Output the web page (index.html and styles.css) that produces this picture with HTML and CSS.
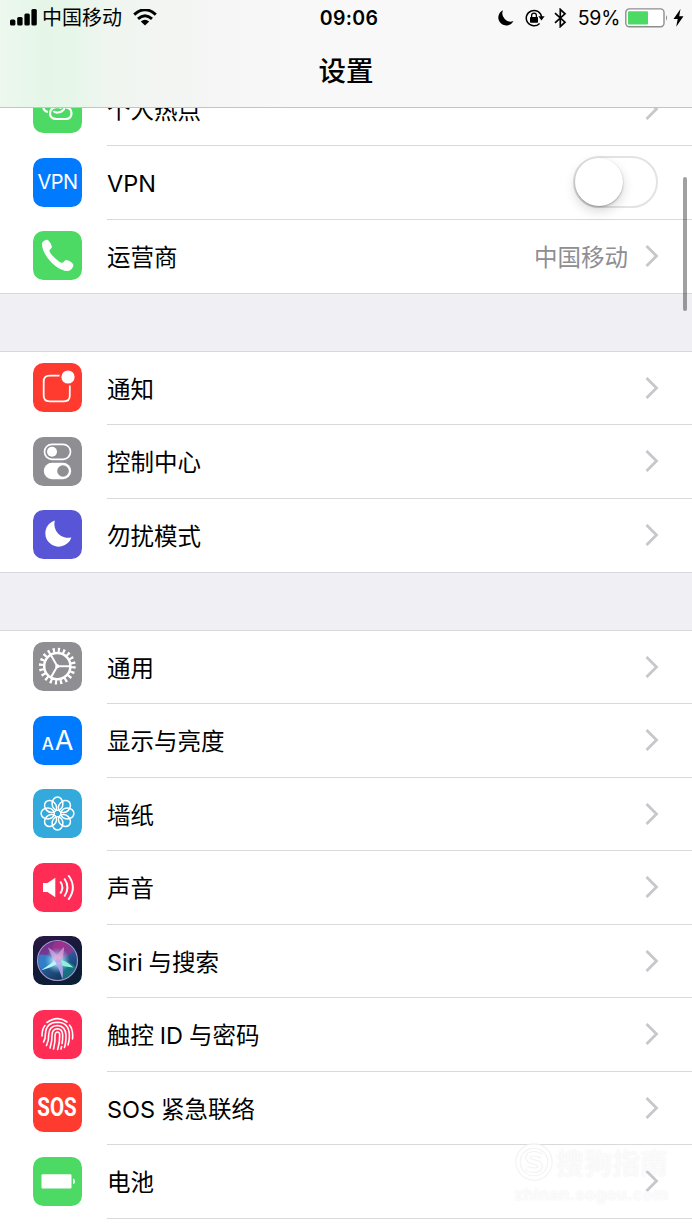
FILE: index.html
```html
<!DOCTYPE html>
<html lang="zh-CN">
<head>
    <meta charset="UTF-8">
    <title>设置</title>
    <link rel="stylesheet" href="styles.css">
</head>
<body>
<svg class="defs" width="0" height="0">
    <symbol id="chevron" viewBox="0 0 14 24">
        <path d="M1.5 2L11.5 12L1.5 22" fill="none" stroke="#c7c7cc" stroke-width="2.8"/>
    </symbol>
</svg>
<div class="header">
    <div class="status">
        <div class="status-left">
            <svg width="28" height="18" viewBox="0 0 28 18">
                <rect x="0" y="10.5" width="5.4" height="6" rx="1.5"/>
                <rect x="7.2" y="8" width="5.4" height="8.5" rx="1.5"/>
                <rect x="14.4" y="4.5" width="5.4" height="12" rx="1.5"/>
                <rect x="21.4" y="0" width="5.4" height="16.5" rx="1.5"/>
            </svg>
            <span class="carrier">中国移动</span>
            <svg width="24" height="18" viewBox="0 0 24 18">
                <path d="M1.2 5.6Q12-4 22.8 5.6M5 9.8Q12 3.6 19 9.8" fill="none" stroke="#000" stroke-width="3"/>
                <path d="M7.8 12.6Q12 9 16.2 12.6L12 16.6Z"/>
            </svg>
        </div>
        <div class="time">09:06</div>
        <div class="status-right">
            <svg class="st-moon" width="16" height="16" viewBox="0 0 16 16">
                <path d="M5 .2A8 8 0 1 0 15.5 11A8.2 8.2 0 0 1 5 .2Z"/>
            </svg>
            <svg class="st-lock" width="20" height="18" viewBox="0 0 20 18">
                <path d="M14.6 14.4A7.7 7.7 0 1 1 16.6 8" fill="none" stroke="#000" stroke-width="1.5"/>
                <path d="M13.4 7.2H19.6L16.5 11.4Z"/>
                <rect x="5" y="8" width="8" height="5.8" rx=".7"/>
                <path d="M6.6 8.5V6.6A2.4 2.4 0 0 1 11.4 6.6V8.5" fill="none" stroke="#000" stroke-width="1.3"/>
            </svg>
            <svg class="st-bt" width="13" height="20" viewBox="0 0 13 20">
                <path d="M1 5.2L11 14.2L6.3 18.6V1.4L11 5.8L1 14.8" fill="none" stroke="#000" stroke-width="1.7"/>
            </svg>
            <span class="percent">59%</span>
            <svg class="st-battery" width="43" height="20" viewBox="0 0 43 20">
                <rect x=".8" y=".9" width="38.2" height="17.8" rx="3.5" fill="#fff" stroke="#8e8e8e" stroke-width="1.4"/>
                <rect x="3" y="3.2" width="20" height="13.2" rx="1" fill="#4cd964"/>
                <path d="M41 7Q43.2 9.8 41 12.8Z" fill="#8e8e8e"/>
            </svg>
            <svg class="st-bolt" width="11" height="18" viewBox="0 0 11 18">
                <path d="M7.5 0L.5 10H4.7L3.2 17.8L10.5 7.2H6.2Z"/>
            </svg>
        </div>
    </div>
    <h1 class="title">设置</h1>
</div>

<div class="settings">
    <ul class="group group-first">
        <li>
            <svg class="icon green" viewBox="0 0 49 49">
                <g fill="none" stroke="#fff" stroke-width="2.2">
                    <path d="M15 28Q10 27 10 21.5Q10 15 17 15H26Q32 15 32 21Q32 27.5 25 28.5Q21.5 28.8 20.5 27"/>
                    <path d="M33 23.5Q38.5 24 38.5 29.3Q38.5 35 32.5 35H23.5Q17 35 17 29.5Q17 24 23 23.2Q27.5 22.6 28.5 24.5"/>
                </g>
            </svg>
            <div class="cell"><span class="label">个人热点</span><svg class="arrow"><use href="#chevron"/></svg></div>
        </li>
        <li>
            <div class="icon blue icon-vpn">VPN</div>
            <div class="cell"><span class="label">VPN</span><span class="switch"></span></div>
        </li>
        <li>
            <svg class="icon green" viewBox="0 0 49 49">
                <path d="M9 13.5C8.5 11.5 12 8.6 14 8.8C16.3 9.1 18.6 14 18.9 16C19 17.8 16 18.5 16.5 20.2C17.6 23.5 25.5 31 28.8 31.8C30.5 32.2 31.3 29 33 28.9C35.3 28.9 40.4 32 40.4 34C40.2 36.5 38 39.8 35 40C24 40.4 9.4 24.5 9 13.5Z" fill="#fff"/>
            </svg>
            <div class="cell"><span class="label">运营商</span><span class="value">中国移动</span><svg class="arrow"><use href="#chevron"/></svg></div>
        </li>
    </ul>

    <ul class="group">
        <li>
            <svg class="icon red" viewBox="0 0 49 49">
                <path d="M26.5 12.7H16.5Q10.7 12.7 10.7 18.5V32.5Q10.7 38.3 16.5 38.3H31Q36.8 38.3 36.8 32.5V22.5" fill="none" stroke="#fff" stroke-width="1.8"/>
                <circle cx="35" cy="14" r="6.6" fill="#fff"/>
            </svg>
            <div class="cell"><span class="label">通知</span><svg class="arrow"><use href="#chevron"/></svg></div>
        </li>
        <li>
            <svg class="icon gray" viewBox="0 0 49 49">
                <rect x="11.5" y="7.3" width="26" height="15" rx="7.5" fill="none" stroke="#fff" stroke-width="1.7"/>
                <circle cx="19" cy="14.8" r="5" fill="#fff"/>
                <rect x="10.8" y="25.8" width="27.4" height="16.4" rx="8.2" fill="#fff"/>
                <circle cx="30" cy="34" r="5.8" fill="#8e8e93"/>
            </svg>
            <div class="cell"><span class="label">控制中心</span><svg class="arrow"><use href="#chevron"/></svg></div>
        </li>
        <li>
            <svg class="icon purple" viewBox="0 0 49 49">
                <path d="M21.8 10.4A13.4 13.4 0 1 0 38.4 27.4A13.8 13.8 0 0 1 21.8 10.4Z" fill="#fff"/>
            </svg>
            <div class="cell"><span class="label">勿扰模式</span><svg class="arrow"><use href="#chevron"/></svg></div>
        </li>
    </ul>

    <ul class="group">
        <li>
            <svg class="icon gray" viewBox="0 0 49 49">
                <g fill="none" stroke="#fff">
                    <circle cx="24.3" cy="24.2" r="13.1" stroke-width="2.5"/>
                    <circle cx="24.3" cy="24.2" r="16" stroke-width="4.8" stroke-dasharray="2.2 2.828"/>
                    <path d="M24.3 24.2H37M24.3 24.2L18 13.2M24.3 24.2L18 35.2" stroke-width="2"/>
                </g>
                <circle cx="24.3" cy="24.2" r="2" fill="#fff"/>
            </svg>
            <div class="cell"><span class="label">通用</span><svg class="arrow"><use href="#chevron"/></svg></div>
        </li>
        <li>
            <div class="icon blue icon-aa"><small>A</small>A</div>
            <div class="cell"><span class="label">显示与亮度</span><svg class="arrow"><use href="#chevron"/></svg></div>
        </li>
        <li>
            <svg class="icon cyan" viewBox="0 0 49 49">
                <g fill="none" stroke="#fff" stroke-width="1.5">
                    <ellipse cx="24.5" cy="14.7" rx="5.4" ry="6.6"/>
                    <ellipse cx="24.5" cy="14.7" rx="5.4" ry="6.6" transform="rotate(45 24.5 24.5)"/>
                    <ellipse cx="24.5" cy="14.7" rx="5.4" ry="6.6" transform="rotate(90 24.5 24.5)"/>
                    <ellipse cx="24.5" cy="14.7" rx="5.4" ry="6.6" transform="rotate(135 24.5 24.5)"/>
                    <ellipse cx="24.5" cy="14.7" rx="5.4" ry="6.6" transform="rotate(180 24.5 24.5)"/>
                    <ellipse cx="24.5" cy="14.7" rx="5.4" ry="6.6" transform="rotate(225 24.5 24.5)"/>
                    <ellipse cx="24.5" cy="14.7" rx="5.4" ry="6.6" transform="rotate(270 24.5 24.5)"/>
                    <ellipse cx="24.5" cy="14.7" rx="5.4" ry="6.6" transform="rotate(315 24.5 24.5)"/>
                </g>
            </svg>
            <div class="cell"><span class="label">墙纸</span><svg class="arrow"><use href="#chevron"/></svg></div>
        </li>
        <li>
            <svg class="icon pink" viewBox="0 0 49 49">
                <path d="M10 20H14.5L22.3 14.8V34.2L14.5 29H10Z" fill="#fff"/>
                <path d="M27.3 18.5Q31.5 24.5 27.3 30.5M31.3 15.5Q37.6 24.5 31.3 33.5M35.3 12.3Q44.5 24.5 35.3 36.7" fill="none" stroke="#fff" stroke-width="1.9"/>
            </svg>
            <div class="cell"><span class="label">声音</span><svg class="arrow"><use href="#chevron"/></svg></div>
        </li>
        <li>
            <svg class="icon siri" viewBox="0 0 49 49">
                <defs>
                    <radialGradient id="glow" cx=".5" cy=".5" r=".5">
                        <stop offset="0" stop-color="#fff"/>
                        <stop offset=".3" stop-color="#d5eefa" stop-opacity=".8"/>
                        <stop offset="1" stop-color="#5ac8e8" stop-opacity="0"/>
                    </radialGradient>
                    <linearGradient id="orb" x1="0" y1="0" x2=".5" y2="1">
                        <stop offset="0" stop-color="#5b2a86"/>
                        <stop offset=".3" stop-color="#7c3590"/>
                        <stop offset=".6" stop-color="#2a5a9c"/>
                        <stop offset="1" stop-color="#133a5c"/>
                    </linearGradient>
                </defs>
                <circle cx="24.5" cy="24.5" r="20" fill="url(#orb)"/>
                <path d="M24 24Q16 12 22 6Q33 3 41 15Q34 22 24 24Z" fill="#b52d8c" opacity=".6"/>
                <path d="M24 24Q12 17 6 19Q3 28 9 34Q17 26 24 24Z" fill="#2a8fd6" opacity=".75"/>
                <path d="M24 24Q37 24 43 31Q38 42 29 43Q27 33 24 24Z" fill="#188a94" opacity=".65"/>
                <circle cx="24.5" cy="24.5" r="13" fill="url(#glow)"/>
                <path d="M25 22Q17 28 8 34.5Q18 32 26 27Z" fill="#b5f7ff"/>
                <path d="M23 22.5Q33 24 40.5 31.5Q31 31 23 27Z" fill="#90f0d4"/>
                <path d="M27 24Q22 15 15 11.5Q18 20 22 26Z" fill="#d9a5e4" opacity=".75"/>
                <path d="M22 25Q26 15 31 11Q31 20 27 27Z" fill="#e3a0d8" opacity=".75"/>
                <path d="M22 25Q26 33 29.5 43Q31 32 27.5 23Z" fill="#bda5f2" opacity=".85"/>
                <circle cx="24.5" cy="24.5" r="20" fill="none" stroke="#a99bd0" stroke-width="1.1"/>
            </svg>
            <div class="cell"><span class="label">Siri 与搜索</span><svg class="arrow"><use href="#chevron"/></svg></div>
        </li>
        <li>
            <svg class="icon pink" viewBox="0 0 49 49">
                <g fill="none" stroke="#fff" stroke-width="1.6" stroke-linecap="round">
                    <path d="M14 12.5Q24.5 5 34 12M36.5 15Q40.5 20 39.5 29"/>
                    <path d="M9 26Q9 19 12 15.5"/>
                    <path d="M10.5 32Q12.5 29 12.4 24Q13 12.4 24.5 12.2Q36 12.5 36.4 25Q36.5 31 35 35"/>
                    <path d="M13.5 35.5Q16 30 15.7 24.5Q16.2 15.7 24.5 15.5Q32.5 16 33 25Q33 33 31.5 37.5"/>
                    <path d="M17 38Q19.3 31 19 25Q19.3 19 24.5 18.8Q29.4 19 29.7 25Q29.8 30 29 33.5M28.6 36.5L28 39"/>
                    <path d="M20.5 39Q22.4 32 22.1 25Q22.4 22 24.5 22Q26.6 22 26.7 25Q26.8 33 24.6 39.5"/>
                </g>
            </svg>
            <div class="cell"><span class="label">触控 ID 与密码</span><svg class="arrow"><use href="#chevron"/></svg></div>
        </li>
        <li>
            <div class="icon red icon-sos"><span>SOS</span></div>
            <div class="cell"><span class="label">SOS 紧急联络</span><svg class="arrow"><use href="#chevron"/></svg></div>
        </li>
        <li>
            <svg class="icon green" viewBox="0 0 49 49">
                <rect x="8.5" y="17.2" width="30" height="14.3" rx="1.2" fill="#fff"/>
                <path d="M40 21.5Q42 22 42 24.4Q42 26.8 40 27.3Z" fill="#fff"/>
            </svg>
            <div class="cell"><span class="label">电池</span><svg class="arrow"><use href="#chevron"/></svg></div>
        </li>
    </ul>
</div>

<div class="scrollbar"></div>
<div class="watermark">
    <div class="wm-top">
        <svg width="40" height="40" viewBox="0 0 40 40">
            <g fill="none" stroke="#efefef" stroke-width="5.4">
                <circle cx="20" cy="20" r="16"/>
                <path d="M28 14Q20 10 15 13Q11 18 20 20Q29 22 25 27Q19 30 12 26"/>
            </g>
            <g fill="none" stroke="#fff" stroke-width="3.4">
                <circle cx="20" cy="20" r="16"/>
                <path d="M28 14Q20 10 15 13Q11 18 20 20Q29 22 25 27Q19 30 12 26"/>
            </g>
        </svg>
        <span>搜狗指南</span>
    </div>
    <div class="wm-url">zhinan.sogou.com</div>
</div>
</body>
</html>
```

FILE: styles.css
```css
* {
    padding: 0;
    margin: 0;
    box-sizing: border-box;
}

body {
    width: 692px;
    height: 1230px;
    overflow: hidden;
    position: relative;
    background: #fff;
    color: #000;
    font-family: Inter, "Noto Sans CJK SC", sans-serif;
}

li {
    list-style: none;
}

.defs {
    position: absolute;
}

/* 顶部 */
.header {
    height: 108px;
    border-bottom: 1px solid #c4c4c6;
    background: linear-gradient(90deg, #edf8ef 0, #e5f6e8 45px, #e7f6ea 75px, #f0f5f0 110px, #f4f5f4 200px, #f8f8f8 290px);
}

.status {
    height: 35px;
    display: grid;
    grid-template-columns: 1fr auto 1fr;
    align-items: center;
    padding: 0 8px 0 10px;
}

.status-left, .status-right {
    display: flex;
    align-items: center;
}

.status-right {
    justify-content: flex-end;
}

.carrier {
    font-size: 20px;
    line-height: 30px;
    margin: 0 11px 0 4px;
}

.time {
    font-size: 19.5px;
    font-weight: 600;
    letter-spacing: 0.3px;
    padding-left: 4px;
}

.st-lock {
    margin-left: 11px;
}

.st-bt {
    margin-left: 9px;
}

.percent {
    font-size: 19.5px;
    letter-spacing: -0.3px;
    margin: 0 5px 0 11px;
}

.st-bolt {
    margin-left: 5px;
}

.title {
    font-size: 27.5px;
    line-height: 40px;
    font-weight: 500;
    text-align: center;
    padding-top: 16px;
}

/* 列表 */
.settings {
    height: 1122px;
    overflow: hidden;
    display: flex;
    flex-direction: column;
    gap: 58.5px;
    background: #efeff4;
}

.group {
    flex: none;
    background: #fff;
    box-shadow: 0 0 0 1px #d9d9dd;
}

.group-first {
    margin-top: -35.5px;
}

.group:last-child {
    padding-bottom: 20px;
}

.group li {
    height: 73.5px;
    padding-left: 33px;
    display: flex;
    align-items: center;
}

.icon {
    width: 49px;
    height: 49px;
    flex: none;
    border-radius: 10.5px;
    margin: -1.5px 25px 0 0;
    color: #fff;
}

.cell {
    flex: 1;
    height: 100%;
    padding-right: 33px;
    display: flex;
    align-items: center;
    border-bottom: 1px solid #d9d9dc;
}

.group li:last-child .cell {
    border-bottom-color: transparent;
}

.group:last-child li:last-child .cell {
    border-bottom-color: #d9d9dc;
}

.label {
    flex: 1;
    font-size: 23.5px;
    line-height: 34px;
    padding-top: 4px;
    word-spacing: -0.8px;
}

.value {
    font-size: 23.5px;
    line-height: 34px;
    padding-top: 4px;
    margin-right: 17px;
    color: #8e8e93;
}

.arrow {
    width: 14px;
    height: 24px;
}

.switch {
    width: 85px;
    height: 52px;
    margin-right: 1px;
    border: 2px solid #e3e3e3;
    border-radius: 26px;
}

.switch::before {
    content: "";
    display: block;
    width: 48px;
    height: 48px;
    border-radius: 50%;
    background: #fff;
    box-shadow: 0 1px 2px rgba(0, 0, 0, .3), 0 5px 12px rgba(0, 0, 0, .16);
}

/* 图标 */
.green {
    background: #4cd964;
}

.blue {
    background: #007aff;
}

.red {
    background: #ff3b30;
}

.gray {
    background: #8e8e93;
}

.purple {
    background: #5856d6;
}

.cyan {
    background: #34aadc;
}

.pink {
    background: #ff2d55;
}

.siri {
    background: linear-gradient(160deg, #2b1845, #111a38 50%, #0b2036);
}

.icon-vpn {
    font-size: 20px;
    line-height: 49px;
    text-align: center;
    letter-spacing: -0.5px;
}

.icon-aa {
    font-size: 27px;
    line-height: 49px;
    text-align: center;
}

.icon-aa small {
    font-size: 17px;
    font-weight: 500;
    margin-right: 1px;
}

.icon-sos {
    display: flex;
    align-items: center;
    justify-content: center;
    font-family: Roboto, sans-serif;
    font-size: 25px;
    font-weight: 700;
}

.icon-sos span {
    transform: scaleX(.82);
}

.scrollbar {
    position: absolute;
    top: 177px;
    right: 5px;
    width: 4px;
    height: 134px;
    border-radius: 2px;
    background: rgba(0, 0, 0, .37);
}

/* 水印 */
.watermark {
    position: absolute;
    left: 514px;
    top: 1142px;
    width: 158px;
    color: rgba(255, 255, 255, .75);
    text-shadow: 0 0 2px rgba(0, 0, 0, .09);
    opacity: .8;
}

.wm-top {
    display: flex;
    align-items: center;
    gap: 2px;
    height: 40px;
    font-size: 28px;
    font-weight: 500;
}

.wm-url {
    font-size: 16.5px;
    line-height: 24px;
    font-weight: 600;
    letter-spacing: 0.4px;
    white-space: nowrap;
}
```
